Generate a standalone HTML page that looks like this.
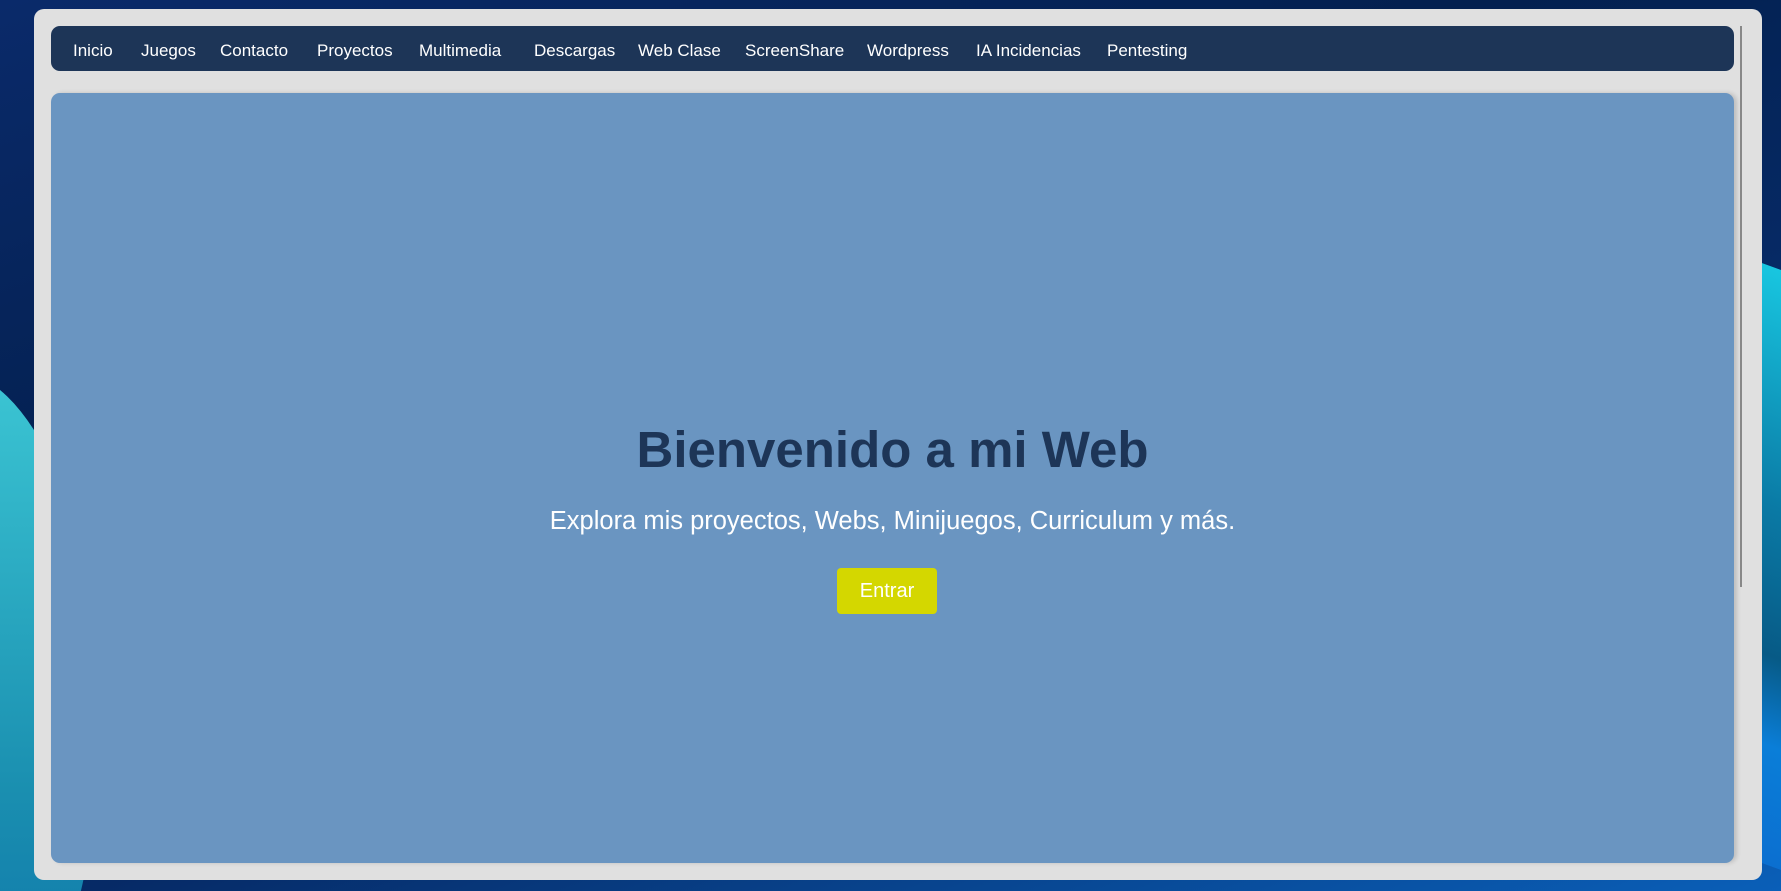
<!DOCTYPE html>
<html><head><meta charset="utf-8"><style>
html,body{margin:0;padding:0;width:1781px;height:891px;overflow:hidden;font-family:"Liberation Sans",sans-serif}
body{background:linear-gradient(160deg,#0a2a6a 0%,#03204f 35%,#062a66 60%,#0a5fb8 100%);position:relative}
.bg{position:absolute;left:0;top:0;width:1781px;height:891px;overflow:hidden}
.wl{position:absolute;left:-200px;top:370px;width:300px;height:700px;border-radius:50%;background:linear-gradient(180deg,#3cc6d4,#1a8fb0 60%,#0b6ea8);}
.wr{position:absolute;right:-60px;top:270px;width:120px;height:600px;background:linear-gradient(180deg,#18c6e0,#0a7aa5 40%,#075a86 65%,#0a7ed8 80%,#0b6fd0);transform:skewY(20deg)}
.panel{position:absolute;left:34px;top:9px;width:1728px;height:871px;background:#e0e0e0;border-radius:10px}
.nav{position:absolute;left:51px;top:26px;width:1683px;height:45px;background:#1d3557;border-radius:9px}
.nav span{position:absolute;top:15px;color:#fff;font-size:17px;white-space:nowrap}
.hero{position:absolute;left:51px;top:93px;width:1683px;height:770px;background:#6a95c1;border-radius:9px;box-shadow:3px 0 4px rgba(0,0,0,.15)}
.sb{position:absolute;left:1740px;top:26px;width:2px;height:561px;background:#888}
h1{position:absolute;left:0;width:1683px;top:327px;margin:0;text-align:center;color:#1d3557;font-size:51px;font-weight:bold}
p{position:absolute;left:0;width:1683px;top:414px;margin:0;text-align:center;color:#fff;font-size:25.5px}
.btn{position:absolute;left:786px;top:475px;width:100px;height:46px;background:#d4d700;border-radius:4px;color:#fff;font-size:20px;text-align:center;line-height:46px}
</style></head><body>
<div class="bg"><div class="wl"></div><div class="wr"></div></div>
<div class="panel"></div>
<div class="nav">
<span style="left:22px">Inicio</span>
<span style="left:90px">Juegos</span>
<span style="left:169px">Contacto</span>
<span style="left:266px">Proyectos</span>
<span style="left:368px">Multimedia</span>
<span style="left:483px">Descargas</span>
<span style="left:587px">Web Clase</span>
<span style="left:694px">ScreenShare</span>
<span style="left:816px">Wordpress</span>
<span style="left:925px">IA Incidencias</span>
<span style="left:1056px">Pentesting</span>
</div>
<div class="hero">
<h1>Bienvenido a mi Web</h1>
<p>Explora mis proyectos, Webs, Minijuegos, Curriculum y más.</p>
<div class="btn">Entrar</div>
</div>
<div class="sb"></div>
</body></html>
